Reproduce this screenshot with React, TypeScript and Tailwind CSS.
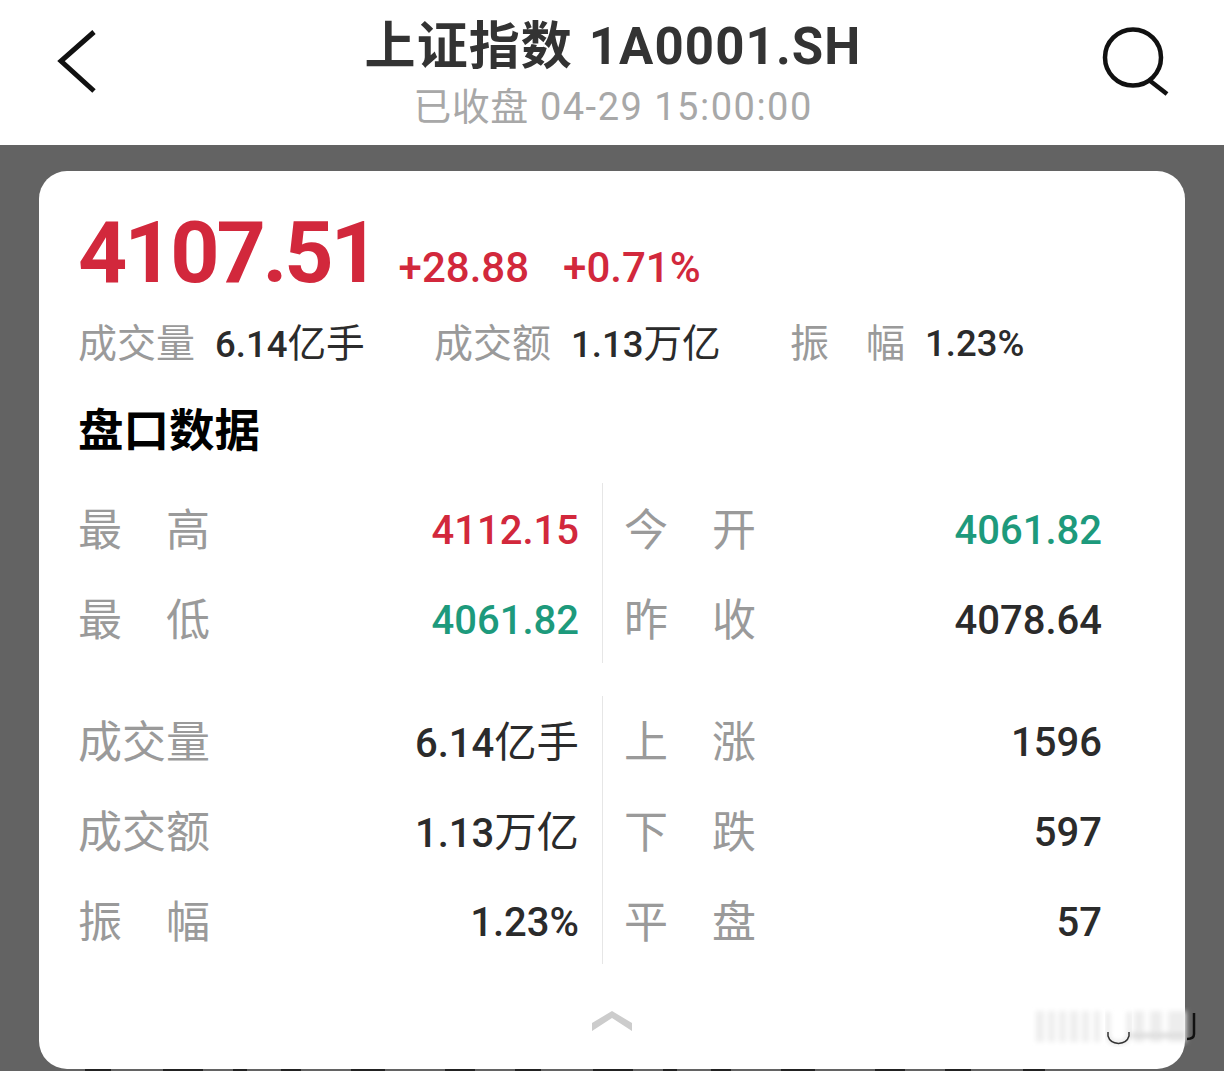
const FONT = 'font-["Roboto","Noto_Sans_CJK_SC",sans-serif]';

const RED = 'text-[#d2283c]';
const GREEN = 'text-[#1d9a7c]';
const DARK = 'text-[#2b2b2b]';

type Row = { label: string[]; value: string; color: string };

const groups: { left: Row[]; right: Row[]; divider: string; pad: string }[] = [
  {
    divider: 'h-[180px]',
    pad: 'pt-[3px]',
    left: [
      { label: ['最', '高'], value: '4112.15', color: RED },
      { label: ['最', '低'], value: '4061.82', color: GREEN },
    ],
    right: [
      { label: ['今', '开'], value: '4061.82', color: GREEN },
      { label: ['昨', '收'], value: '4078.64', color: DARK },
    ],
  },
  {
    divider: 'h-[268px]',
    pad: 'pt-[2px]',
    left: [
      { label: ['成交量'], value: '6.14亿手', color: DARK },
      { label: ['成交额'], value: '1.13万亿', color: DARK },
      { label: ['振', '幅'], value: '1.23%', color: DARK },
    ],
    right: [
      { label: ['上', '涨'], value: '1596', color: DARK },
      { label: ['下', '跌'], value: '597', color: DARK },
      { label: ['平', '盘'], value: '57', color: DARK },
    ],
  },
];

// the CJK unit in a value is drawn a bit larger and lighter than the digits
function Value({ text }: { text: string }) {
  const parts = text.split(/([\u4e00-\u9fff]+)/).filter(Boolean);
  return (
    <>
      {parts.map((p) =>
        /[\u4e00-\u9fff]/.test(p) ? (
          <span key={p} className="text-[1.06em] font-normal">{p}</span>
        ) : (
          <span key={p}>{p}</span>
        ),
      )}
    </>
  );
}

function DataRow({ row }: { row: Row }) {
  return (
    <div className="flex h-[90px] items-center justify-between">
      <span className="flex w-[132px] justify-between text-[44px] leading-none text-[#9a9a9a]">
        {row.label.map((c) => (
          <span key={c}>{c}</span>
        ))}
      </span>
      <span className={`text-[40px] leading-none font-medium ${row.color}`}>
        <Value text={row.value} />
      </span>
    </div>
  );
}

function Stat({ label, value, className }: { label: string[]; value: string; className: string }) {
  return (
    <div className={`flex items-center gap-[20px] ${className}`}>
      <span className={`flex justify-between text-[39px] leading-none text-[#9a9a9a] ${label.length > 1 ? 'w-[115px]' : ''}`}>
        {label.map((c) => (
          <span key={c}>{c}</span>
        ))}
      </span>
      <span className="text-[36.5px] leading-none font-medium text-[#2b2b2b]">
        <Value text={value} />
      </span>
    </div>
  );
}

export default function App() {
  return (
    <div className={`${FONT} relative h-[1071px] w-[1224px] overflow-hidden bg-[#636363]`}>
      <header className="flex h-[145px] items-start justify-between bg-white pr-[54px] pl-[56px]">
        <div className="w-[70px] pt-[30px]">
          <svg width="42" height="64" viewBox="0 0 42 64" fill="none" stroke="#111" strokeWidth="5">
            <path d="M38 2 L5 31 L38 61" />
          </svg>
        </div>
        <div className="flex flex-col items-center pt-[17px]">
          <div className="text-[51px] leading-[60px] font-bold whitespace-nowrap text-[#333]">
            <span className="tracking-[1.1px]">上证指数</span>
            <span className="ml-[2px] tracking-[1.1px]"> 1A0001.SH</span>
          </div>
          <div className="mt-[10px] text-[38px] leading-[40px] whitespace-nowrap text-[#a8a8a8]">
            <span className="tracking-[0.6px]">已收盘</span>
            <span className="tracking-[1.5px]"> 04-29 15:00:00</span>
          </div>
        </div>
        <svg width="70" height="70" viewBox="0 0 70 70" className="mt-[27px]" fill="none" stroke="#111" strokeWidth="4.5">
          <circle cx="33" cy="30.500" r="28" />
          <path d="M49 53 L67 67" />
        </svg>
      </header>

      <div className="px-[39px] pt-[26px]">
        <div className="relative h-[898px] rounded-[28px] bg-white pt-[38px] pr-[83px] pl-[39px]">
          <div className="flex items-end">
            <span className={`text-[86px] leading-[88px] font-bold tracking-[-3.2px] ${RED}`}>4107.51</span>
            <span className={`ml-[22px] pb-[8px] text-[42px] leading-none font-medium ${RED}`}>+28.88</span>
            <span className={`ml-[34px] pb-[8px] text-[42px] leading-none font-medium ${RED}`}>+0.71%</span>
          </div>

          <div className="mt-[28px] flex">
            <Stat label={['成交量']} value="6.14亿手" className="w-[356px]" />
            <Stat label={['成交额']} value="1.13万亿" className="w-[356px]" />
            <Stat label={['振', '幅']} value="1.23%" className="" />
          </div>

          <h2 className="mt-[43px] text-[45.5px] leading-[50px] font-bold text-black">盘口数据</h2>

          <div className="mt-[26px] flex flex-col gap-[30px]">
            {groups.map((g, i) => (
              <div key={i} className="flex">
                <div className={`w-[501px] ${g.pad}`}>
                  {g.left.map((r) => (
                    <DataRow key={r.value + r.label[0]} row={r} />
                  ))}
                </div>
                <div className={`mr-[21px] ml-[23px] w-[1px] bg-[#e6e6e6] ${g.divider}`} />
                <div className={`flex-1 ${g.pad}`}>
                  {g.right.map((r) => (
                    <DataRow key={r.value + r.label[0]} row={r} />
                  ))}
                </div>
              </div>
            ))}
          </div>

          <svg width="40" height="20" viewBox="0 0 40 20" className="absolute top-[840px] left-[553px]" fill="#cccccc">
            <path d="M20 0 L40 12 L40 20 L20 7 L0 20 L0 12 Z" />
          </svg>
        </div>
      </div>

      {/* blurred watermark, bottom right */}
      <svg width="170" height="45" viewBox="0 0 170 45" className="absolute top-[1006px] left-[1030px]" fill="none">
        <defs>
          <filter id="soft"><feGaussianBlur stdDeviation="2.4" /></filter>
        </defs>
        <g filter="url(#soft)" fill="#ededed">
          <rect x="6" y="5" width="8" height="31" />
          <rect x="18" y="5" width="7" height="31" />
          <rect x="29" y="5" width="7" height="31" />
          <rect x="40" y="5" width="8" height="31" />
          <rect x="52" y="5" width="7" height="31" />
          <rect x="64" y="5" width="6" height="31" />
          <rect x="104" y="5" width="10" height="31" />
          <rect x="120" y="5" width="12" height="31" />
          <rect x="138" y="5" width="18" height="31" />
          <rect x="100" y="27" width="55" height="5" fill="#dcdcdc" />
        </g>
        <path d="M78 6 V28 Q78 37 88 37 Q99 37 99 28 V6" stroke="#cfcfcf" strokeWidth="2" filter="url(#soft)" />
        <path d="M78 26 V30 Q80 37 88.500 37.500 Q97 37 99 30 V26" stroke="#333" strokeWidth="1.500" />
        <path d="M164 7 V28 Q164 33 157 33" stroke="#111" strokeWidth="2.500" />
      </svg>

      {/* top edge of the row cut off below the card */}
      <svg width="960" height="2" viewBox="0 0 960 2" className="absolute top-[1069px] left-[85px]">
        <path d="M0 1 H960" stroke="#222" strokeWidth="2" strokeDasharray="26 52 40 30 14 34 20 50 34 60 30 40" />
      </svg>
    </div>
  );
}
